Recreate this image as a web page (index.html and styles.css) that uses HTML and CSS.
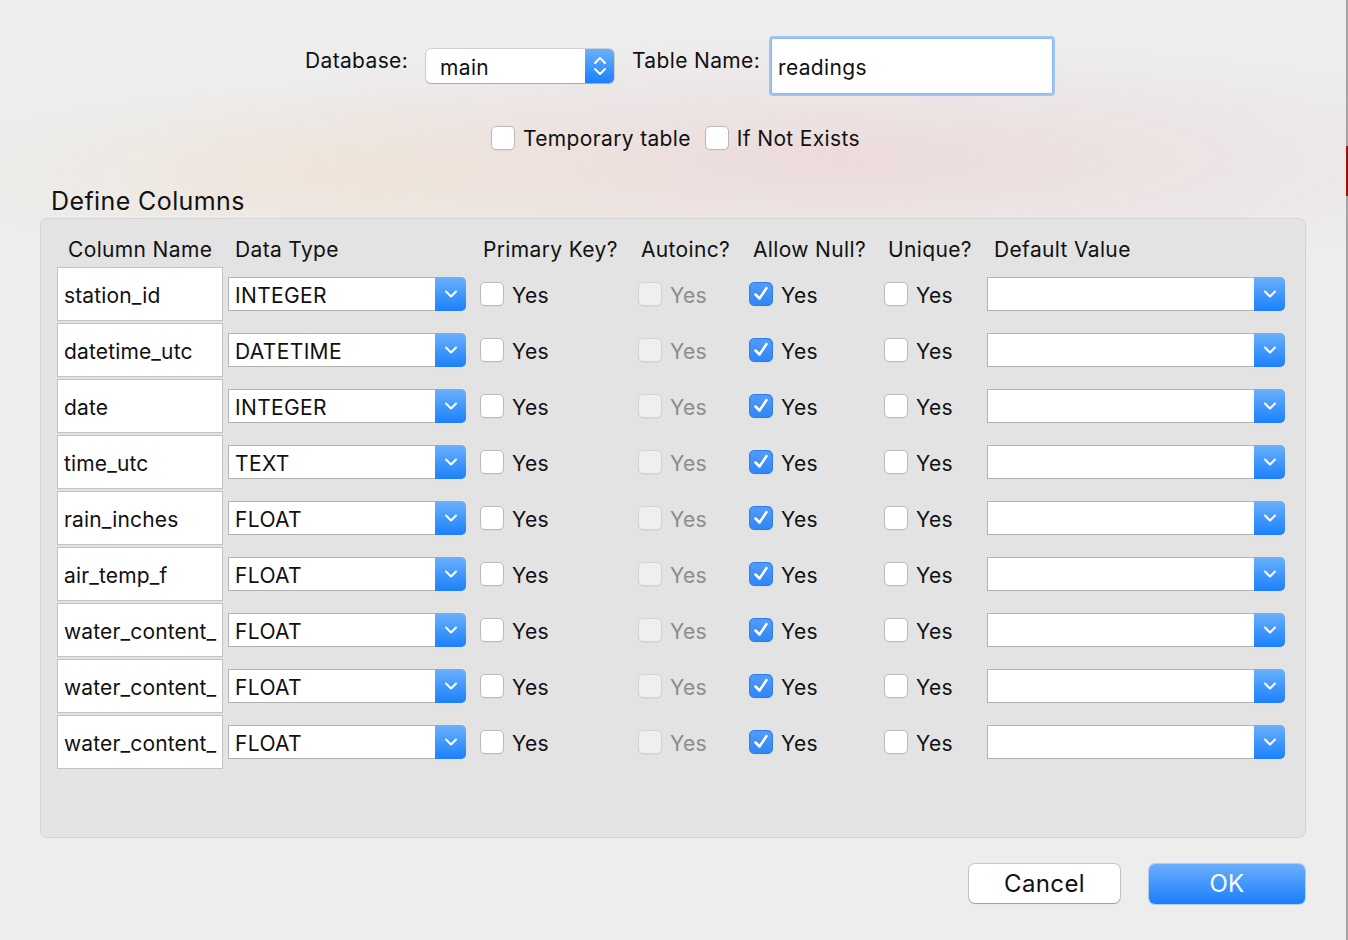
FILE: index.html
```html
<!DOCTYPE html>
<html>
<head>
<meta charset="utf-8">
<link rel="stylesheet" href="styles.css">
</head>
<body>
<div class="screen">
  <div class="dialog">
    <div class="top-row">
      <div class="lbl lbl-db">Database:</div>
      <div class="popup">
        <div class="popup-text">main</div>
        <div class="popup-btn">
          <svg width="14" height="22" viewBox="0 0 14 22"><path d="M2 8 L7 3 L12 8 M2 14 L7 19 L12 14" fill="none" stroke="#fff" stroke-width="2" stroke-linecap="round" stroke-linejoin="round"/></svg>
        </div>
      </div>
      <div class="lbl lbl-tn">Table Name:</div>
      <div class="field">readings</div>
    </div>

    <div class="opt-row">
      <label class="opt"><span class="cb"></span><span>Temporary table</span></label>
      <label class="opt"><span class="cb"></span><span>If Not Exists</span></label>
    </div>

    <div class="section-title">Define Columns</div>

    <div class="panel">
      <div class="grid head">
        <div class="h h1">Column Name</div>
        <div class="h h2">Data Type</div>
        <div class="h h3">Primary Key?</div>
        <div class="h h4">Autoinc?</div>
        <div class="h h5">Allow Null?</div>
        <div class="h h6">Unique?</div>
        <div class="h h7">Default Value</div>
      </div>

      <div class="rows" id="rows"></div>
    </div>

    <div class="btn-row">
      <div class="btn btn-cancel">Cancel</div>
      <div class="btn btn-ok">OK</div>
    </div>
  </div>
  <div class="edge"><div class="edge-red"></div></div>
</div>
<script src="app.js"></script>
</body>
</html>
```

FILE: app.js
```javascript
const data = [
  ["station_id", "INTEGER"],
  ["datetime_utc", "DATETIME"],
  ["date", "INTEGER"],
  ["time_utc", "TEXT"],
  ["rain_inches", "FLOAT"],
  ["air_temp_f", "FLOAT"],
  ["water_content_", "FLOAT"],
  ["water_content_", "FLOAT"],
  ["water_content_", "FLOAT"]
];
const chev = '<svg width="14" height="10" viewBox="0 0 14 10"><path d="M2 2.5 L7 7.5 L12 2.5" fill="none" stroke="#fff" stroke-width="2" stroke-linecap="round" stroke-linejoin="round"/></svg>';
const check = '<svg width="22" height="22" viewBox="0 0 22 22"><path d="M5.5 11.5 L9.5 15.5 L16.5 5" fill="none" stroke="#fff" stroke-width="2.5" stroke-linecap="round" stroke-linejoin="round"/></svg>';
const rows = document.getElementById('rows');
rows.innerHTML = data.map(([n, t]) => `
  <div class="grid row">
    <div class="c1"><div class="name-cell"><div class="name-text">${n}</div></div></div>
    <div class="c2"><div class="sel sel-type"><div class="sel-text">${t}</div><div class="sel-btn">${chev}</div></div></div>
    <div class="c3"><span class="cb"></span><span class="yes">Yes</span></div>
    <div class="c4"><span class="cb cb-dis"></span><span class="yes yes-dis">Yes</span></div>
    <div class="c5"><span class="cb cb-on">${check}</span><span class="yes">Yes</span></div>
    <div class="c6"><span class="cb"></span><span class="yes">Yes</span></div>
    <div class="c7"><div class="sel sel-def"><div class="sel-text"></div><div class="sel-btn">${chev}</div></div></div>
  </div>`).join('');
```

FILE: styles.css
```css
* { box-sizing: border-box; }
html, body { margin: 0; padding: 0; }
body {
  width: 1348px;
  height: 940px;
  overflow: hidden;
  font-family: Inter, "Liberation Sans", Arial, sans-serif;
  font-size: 21px;
  letter-spacing: 0.35px;
  color: #111;
}
.screen {
  display: flex;
  width: 1348px;
  height: 940px;
}
.dialog {
  width: 1346px;
  height: 940px;
  background:
    radial-gradient(ellipse 420px 90px at 330px 175px, rgba(240, 225, 205, 0.55), rgba(240, 225, 205, 0) 100%),
    radial-gradient(ellipse 720px 120px at 840px 160px, rgba(236, 216, 216, 0.85), rgba(236, 216, 216, 0) 100%),
    #ededed;
  display: flex;
  flex-direction: column;
}
.edge {
  width: 2px;
  height: 940px;
  background: #a3a3a3;
  padding-top: 146px;
}
.edge-red {
  height: 50px;
  background: #a00f12;
}

/* top row */
.top-row {
  display: flex;
  align-items: flex-start;
  padding: 38px 0 0 305px;
  height: 94px;
}
.lbl { line-height: 24px; margin-top: 11px; }
.lbl-db { width: 121px; }
.lbl-tn { width: 139px; margin-left: 18px; }
.popup {
  margin-top: 11px;
  width: 188px;
  height: 34px;
  display: flex;
  border-radius: 5px;
  background: #fff;
  box-shadow: 0 0 0 1px rgba(0,0,0,0.12), 0 1px 1px rgba(0,0,0,0.18);
  overflow: hidden;
}
.popup-text {
  flex: 1;
  padding-left: 14px;
  line-height: 37px;
}
.popup-btn {
  width: 29px;
  background: linear-gradient(#6ab1fb, #1a80fb);
  display: flex;
  align-items: center;
  justify-content: center;
}
.field {
  width: 282px;
  height: 56px;
  background: #fff;
  border: 1px solid #8fb6e6;
  box-shadow: 0 0 0 2px #9cc6f5;
  border-radius: 2px;
  padding-left: 6px;
  line-height: 57px;
}

/* options */
.opt-row {
  display: flex;
  padding: 32px 0 0 491px;
  height: 93px;
}
.opt {
  display: flex;
  align-items: center;
  gap: 8px;
  margin-right: 14px;
  height: 24px;
}
.cb {
  display: inline-block;
  flex: none;
  width: 24px;
  height: 24px;
  border-radius: 5px;
  background: #fff;
  border: 1px solid #b9b9b9;
  box-shadow: 0 1px 0 rgba(0,0,0,0.04);
}
.cb-dis {
  background: #efefef;
  border-color: #d2d2d2;
}
.cb-on {
  background: linear-gradient(#4f9cf9, #2f86f6);
  border-color: #2f7fe6;
  display: inline-flex;
  align-items: center;
  justify-content: center;
}

.section-title {
  font-size: 25px;
  line-height: 28px;
  padding-left: 51px;
  height: 31px;
  letter-spacing: 0.4px;
}

/* panel */
.panel {
  margin-left: 40px;
  width: 1266px;
  height: 620px;
  background: #e3e3e3;
  border: 1px solid #d5d5d5;
  border-radius: 7px;
  padding: 17px 0 0 16px;
}
.grid {
  display: grid;
  grid-template-columns: 171px 252px 158px 111px 135px 103px 297px;
  align-items: center;
}
.head {
  height: 26px;
  margin-bottom: 5px;
  line-height: 28px;
}
.h1 { padding-left: 11px; }
.h2 { padding-left: 7px; }
.h3 { padding-left: 3px; }
.h4 { padding-left: 3px; }
.h5 { padding-left: 4px; }
.h6 { padding-left: 4px; }
.h7 { padding-left: 7px; }

.rows {
  display: flex;
  flex-direction: column;
  gap: 2px;
}
.row { height: 54px; }
.name-cell {
  width: 166px;
  height: 54px;
  background: #fff;
  border: 1px solid #c4c4c4;
  padding: 0 3px 0 6px;
  display: flex;
  align-items: center;
}
.name-text {
  white-space: nowrap;
  letter-spacing: 0.15px;
  padding-top: 2px;
}
.sel {
  display: flex;
  height: 34px;
  background: #fff;
  border: 1px solid #b3b3b3;
  border-right: none;
  border-radius: 0 5px 5px 0;
}
.sel-type { width: 238px; }
.sel-def { width: 298px; }
.sel-text {
  flex: 1;
  padding-left: 6px;
  line-height: 36px;
}
.sel-btn {
  width: 31px;
  margin: -1px 0 -1px 0;
  background: linear-gradient(#6ab1fb, #1a80fb);
  border-radius: 0 5px 5px 0;
  display: flex;
  align-items: center;
  justify-content: center;
}
.c3, .c4, .c5, .c6 {
  display: flex;
  align-items: center;
  gap: 8px;
}
.yes { line-height: 24px; padding-top: 3px; }
.yes-dis { color: #8c8c8c; }

/* buttons */
.btn-row {
  display: flex;
  justify-content: flex-end;
  gap: 29px;
  padding: 26px 41px 0 0;
}
.btn {
  height: 39px;
  line-height: 40px;
  border-radius: 6px;
  text-align: center;
  font-size: 24px;
}
.btn-cancel {
  width: 151px;
  background: #fff;
  box-shadow: 0 0 0 1px rgba(0,0,0,0.16), 0 1px 1px rgba(0,0,0,0.2);
}
.btn-ok {
  width: 156px;
  height: 40px;
  color: #fff;
  background: linear-gradient(#6aaefb, #1a7ffb);
  box-shadow: 0 0 0 1px rgba(20,100,220,0.25);
}
```
